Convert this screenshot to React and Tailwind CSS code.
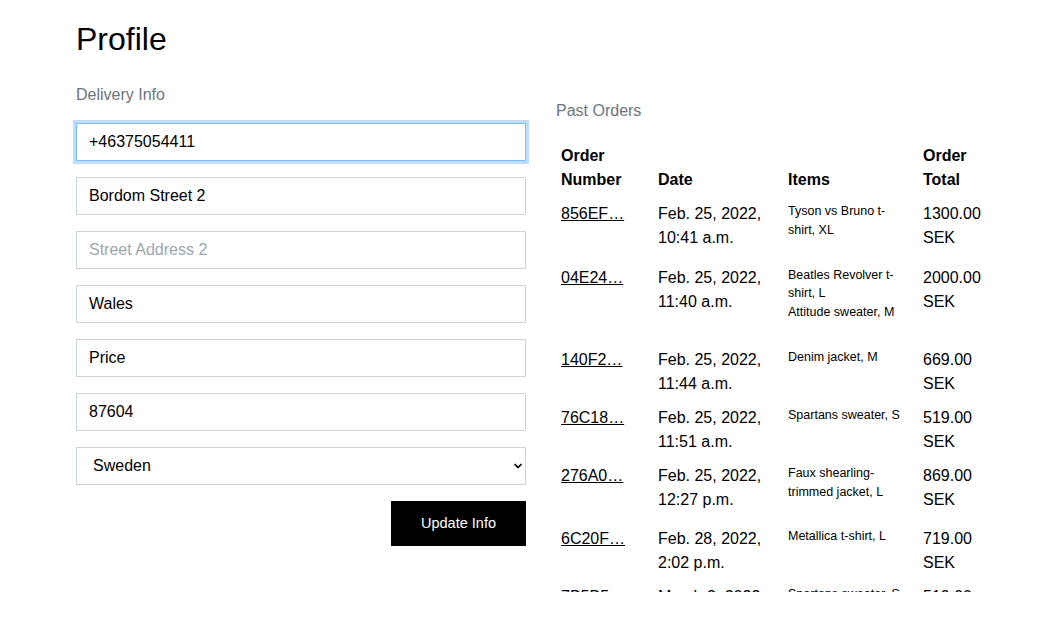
import { ChevronDown } from 'lucide-react'

const orders = [
  { id: '856EF…', date: 'Feb. 25, 2022, 10:41 a.m.', items: ['Tyson vs Bruno t-shirt, XL'], total: '1300.00 SEK' },
  { id: '04E24…', date: 'Feb. 25, 2022, 11:40 a.m.', items: ['Beatles Revolver t-shirt, L', 'Attitude sweater, M'], total: '2000.00 SEK' },
  { id: '140F2…', date: 'Feb. 25, 2022, 11:44 a.m.', items: ['Denim jacket, M'], total: '669.00 SEK' },
  { id: '76C18…', date: 'Feb. 25, 2022, 11:51 a.m.', items: ['Spartans sweater, S'], total: '519.00 SEK' },
  { id: '276A0…', date: 'Feb. 25, 2022, 12:27 p.m.', items: ['Faux shearling-trimmed jacket, L'], total: '869.00 SEK' },
  { id: '6C20F…', date: 'Feb. 28, 2022, 2:02 p.m.', items: ['Metallica t-shirt, L'], total: '719.00 SEK' },
  { id: '7B5B5…', date: 'March 3, 2022, 9:14 a.m.', items: ['Spartans sweater, S'], total: '519.00 SEK' },
]

const inputCls = 'h-[38px] w-full border border-[#ced4da] bg-white px-3 text-[16px] text-black outline-none placeholder:text-[#9ba6b3]'

export default function App() {
  return (
    <div className="min-h-screen bg-white pl-[76px] pt-[20px] font-['Liberation_Sans',Arial,sans-serif] text-black">
      <h1 className="text-[32px] leading-[38px]">Profile</h1>
      <div className="mt-[25px] flex gap-[30px]">
        {/* delivery form */}
        <div className="w-[450px]">
          <p className="mb-[16px] text-[16px] leading-[24px] text-[#6c757d]">Delivery Info</p>
          <form className="flex flex-col gap-4" onSubmit={e => e.preventDefault()}>
            <input className={inputCls + ' !border-[#80bdff] shadow-[0_0_0_3px_rgba(0,123,255,0.25)]'} defaultValue="+46375054411" />
            <input className={inputCls} defaultValue="Bordom Street 2" />
            <input className={inputCls} placeholder="Street Address 2" />
            <input className={inputCls} defaultValue="Wales" />
            <input className={inputCls} defaultValue="Price" />
            <input className={inputCls} defaultValue="87604" />
            <div className="relative">
              <select className={inputCls + ' appearance-none pl-4'} defaultValue="SE">
                <option value="SE">Sweden</option>
                <option value="GB">United Kingdom</option>
              </select>
              <ChevronDown size={12} strokeWidth={3.5} className="pointer-events-none absolute right-[2px] top-[13px] text-black" />
            </div>
            <div className="flex justify-end">
              <button className="h-[45px] w-[135px] bg-black text-[14.5px] text-white">Update Info</button>
            </div>
          </form>
        </div>

        {/* past orders */}
        <div className="mt-[16px] w-[450px]">
          <p className="mb-[16px] text-[16px] leading-[24px] text-[#6c757d]">Past Orders</p>
          <div className="h-[453px] overflow-hidden">
            <table className="w-[450px] table-fixed text-left text-[16px] leading-[24px]">
              <thead>
                <tr>
                  <th className="w-[97px] p-[5px] align-bottom font-bold">Order Number</th>
                  <th className="w-[130px] p-[5px] align-bottom font-bold">Date</th>
                  <th className="w-[135px] p-[5px] align-bottom font-bold">Items</th>
                  <th className="p-[5px] align-bottom font-bold">Order Total</th>
                </tr>
              </thead>
              <tbody>
                {orders.map(o => (
                  <tr key={o.id}>
                    <td className="p-[5px] align-top">
                      <a href="#" className="underline">{o.id}</a>
                    </td>
                    <td className="p-[5px] align-top">{o.date}</td>
                    <td className="p-[5px] align-top">
                      <p className="mb-4 w-[118px] text-[12.5px] leading-[1.5]">
                        {o.items.map((it, i) => (
                          <span key={i}>{it}{i < o.items.length - 1 && <br />}</span>
                        ))}
                      </p>
                    </td>
                    <td className="p-[5px] align-top">{o.total}</td>
                  </tr>
                ))}
              </tbody>
            </table>
          </div>
        </div>
      </div>
    </div>
  )
}
